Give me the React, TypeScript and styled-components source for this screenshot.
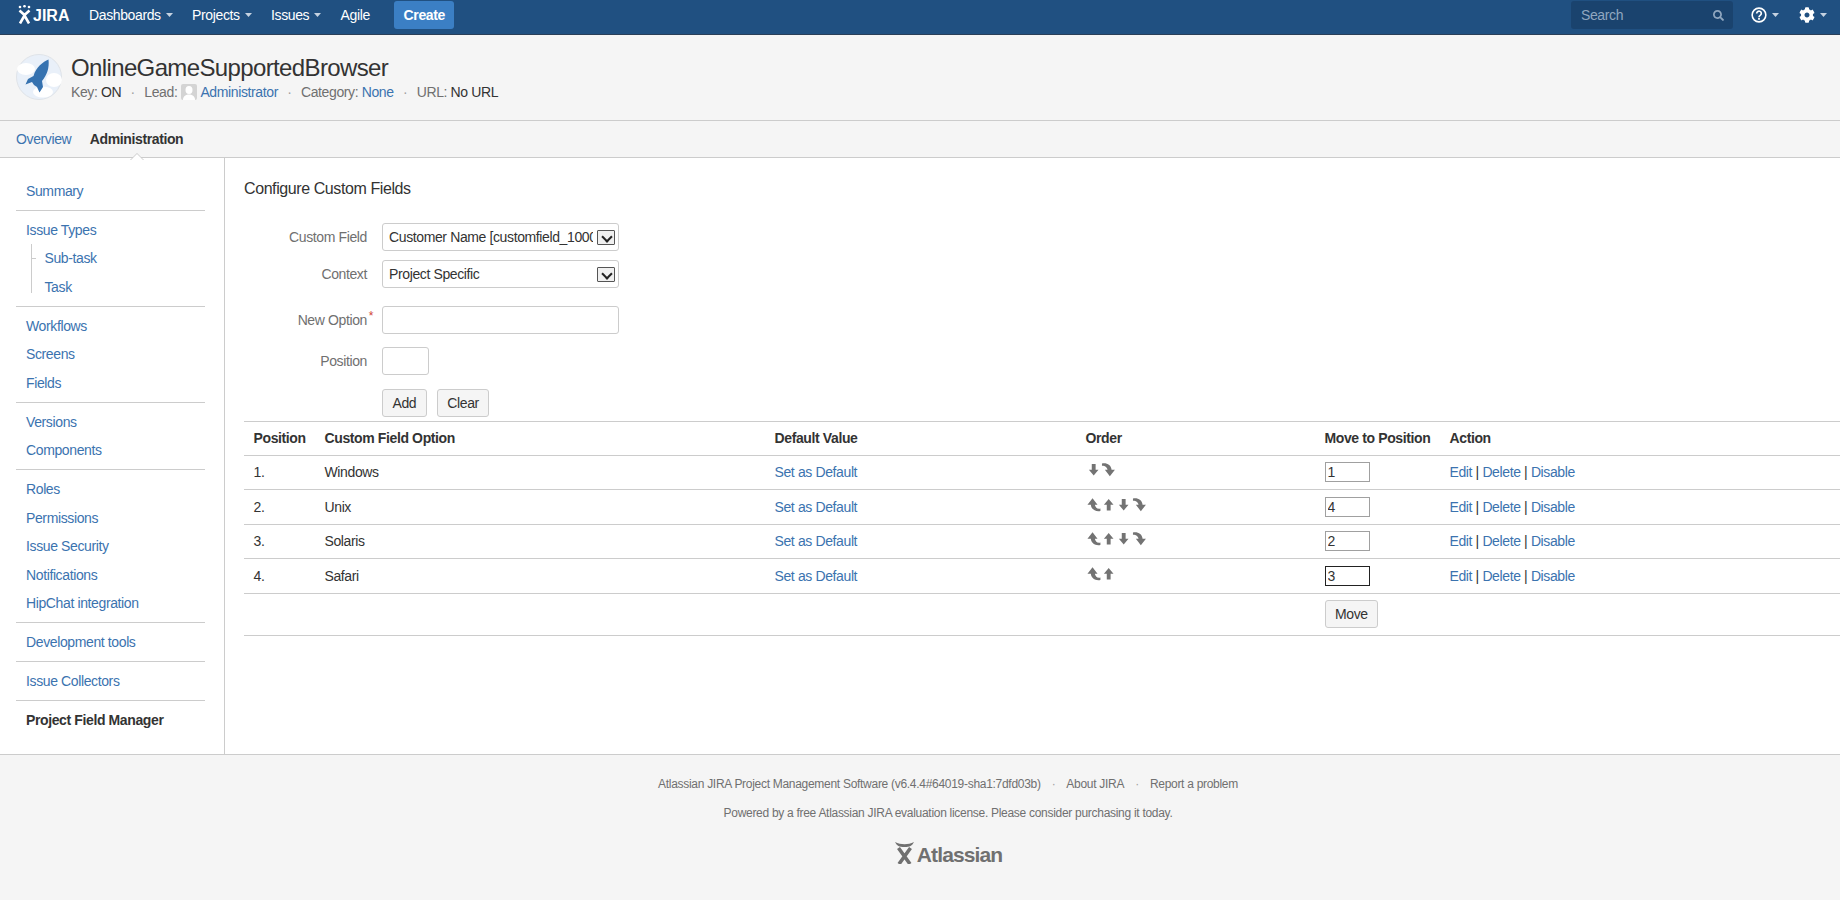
import React from "react";
import styled, { createGlobalStyle } from "styled-components";
import { FaCog, FaSearch } from "react-icons/fa";

const GlobalStyle = createGlobalStyle`
  html, body {
    margin: 0;
    padding: 0;
    background: #fff;
    color: #333;
    font-family: "Liberation Sans", Arial, sans-serif;
    font-size: 14px;
    line-height: 20px;
    letter-spacing: -0.38px;
  }
  * { box-sizing: border-box; }
  button, input, select { letter-spacing: inherit; }
`;

type Option = { pos: number; name: string; moves: string[]; target: string; focused?: boolean };

const options: Option[] = [
  { pos: 1, name: "Windows", moves: ["down", "last"], target: "1" },
  { pos: 2, name: "Unix", moves: ["first", "up", "down", "last"], target: "4" },
  { pos: 3, name: "Solaris", moves: ["first", "up", "down", "last"], target: "2" },
  { pos: 4, name: "Safari", moves: ["first", "up"], target: "3", focused: true },
];

const sidebarGroups = [
  ["Summary"],
  ["Issue Types", "Sub-task", "Task"],
  ["Workflows", "Screens", "Fields"],
  ["Versions", "Components"],
  ["Roles", "Permissions", "Issue Security", "Notifications", "HipChat integration"],
  ["Development tools"],
  ["Issue Collectors"],
];

const Caret = () => (
  <CaretIcon width="7" height="4" viewBox="0 0 7 4">
    <path d="M0 0h7L3.500 4z" fill="currentColor" />
  </CaretIcon>
);

const JiraMark = () => (
  <svg width="13" height="19" viewBox="0 0 13 19">
    <circle cx="2" cy="2" r="1.3" fill="#fff" />
    <circle cx="6.5" cy="1.2" r="1.3" fill="#fff" />
    <circle cx="11" cy="2" r="1.3" fill="#fff" />
    <path d="M1.5 5.5 6.5 10l5-4.500M2 18.500 6.500 10.500 11 18.500" fill="none" stroke="#fff" strokeWidth="2.600" />
  </svg>
);

const HelpIcon = () => (
  <svg width="16" height="16" viewBox="0 0 18 18">
    <circle cx="9" cy="9" r="7.700" fill="none" stroke="#fff" strokeWidth="1.800" />
    <path d="M6.400 7.200a2.600 2.600 0 1 1 4 2.200c-.9.6-1.400 1-1.400 2" fill="none" stroke="#fff" strokeWidth="1.900" />
    <rect x="8" y="12.300" width="2" height="2" fill="#fff" />
  </svg>
);

const ProjectAvatar = () => (
  <svg width="46" height="46" viewBox="0 0 46 46">
    <circle cx="23" cy="23" r="22.500" fill="#e9f0f9" stroke="#dfe3e8" />
    <ellipse cx="10" cy="15" rx="9" ry="6" fill="#fff" />
    <ellipse cx="38" cy="26" rx="8" ry="7" fill="#fff" />
    <ellipse cx="27" cy="38" rx="10" ry="5.500" fill="#fff" />
    <path
      d="M32.500 5.500C27 8 20 13 17.500 22L12 25l-2.500 5.500L16 28l2 3 3 2 2.500 5.500L27 33l-1-6c5-6 7.500-13 6.500-21.500z"
      fill="#3572b0"
    />
  </svg>
);

const UserIcon = () => (
  <svg width="16" height="16" viewBox="0 0 16 16">
    <rect width="16" height="16" rx="2" fill="#d4d4d4" />
    <ellipse cx="8" cy="6" rx="3.500" ry="4" fill="#fff" />
    <path d="M2 16c0-4 3-5.500 6-5.500s6 1.500 6 5.500z" fill="#fff" />
  </svg>
);

const AtlassianMark = () => (
  <svg width="21" height="23" viewBox="0 0 21 23">
    <path d="M1 1c6 3 13 3 19 0-2 4-4 5-9.500 5S3 5 1 1z" fill="#707070" />
    <path d="M4.500 7 16 23M16.500 7 5 23" fill="none" stroke="#707070" strokeWidth="3.600" />
  </svg>
);

const MoveIcon = ({ kind }: { kind: string }) => {
  const curved = kind === "first" || kind === "last";
  return (
    <ArrowIcon $flip={kind === "first" || kind === "up"} viewBox="0 0 16 16">
      {curved ? (
        <path d="M1 1.500C6 .5 10.500 3 11 8h3.500l-5.300 6.800L4 8h2.800C6.500 6 4.500 3 1 4z" fill="#737373" />
      ) : (
        <path d="M6 2h4v6h3l-5 6-5-6h3z" fill="#737373" />
      )}
    </ArrowIcon>
  );
};

export default function App() {
  return (
    <Page>
      <GlobalStyle />
      <TopBar>
        <Logo>
          <JiraMark />
          <LogoText>JIRA</LogoText>
        </Logo>
        <TopLink>Dashboards<Caret /></TopLink>
        <TopLink>Projects<Caret /></TopLink>
        <TopLink>Issues<Caret /></TopLink>
        <TopLink>Agile</TopLink>
        <CreateButton>Create</CreateButton>
        <TopRight>
          <SearchBox>
            <SearchInput placeholder="Search" />
            <FaSearch size={11} />
          </SearchBox>
          <TopIconButton><HelpIcon /><Caret /></TopIconButton>
          <TopIconButton><FaCog size={16} /><Caret /></TopIconButton>
        </TopRight>
      </TopBar>

      <ProjectHeader>
        <ProjectAvatar />
        <ProjectInfo>
          <ProjectTitle>OnlineGameSupportedBrowser</ProjectTitle>
          <ProjectMeta>
            <span>Key: <Value>ON</Value></span>
            <Dot>·</Dot>
            <LeadCell>Lead: <UserIcon /> <Link>Administrator</Link></LeadCell>
            <Dot>·</Dot>
            <span>Category: <Link>None</Link></span>
            <Dot>·</Dot>
            <span>URL: <Value>No URL</Value></span>
          </ProjectMeta>
        </ProjectInfo>
      </ProjectHeader>

      <TabBar>
        <Link>Overview</Link>
        <ActiveTab>Administration</ActiveTab>
      </TabBar>

      <Body>
        <Sidebar>
          {sidebarGroups.map((group) => (
            <SideGroup key={group[0]}>
              {group.map((item) =>
                item === "Sub-task" || item === "Task" ? (
                  <SubItem key={item} $first={item === "Sub-task"}>
                    <Link>{item}</Link>
                  </SubItem>
                ) : (
                  <SideItem key={item}>
                    <Link>{item}</Link>
                  </SideItem>
                )
              )}
            </SideGroup>
          ))}
          <LastGroup>
            <SideItem><strong>Project Field Manager</strong></SideItem>
          </LastGroup>
        </Sidebar>

        <Content>
          <Heading>Configure Custom Fields</Heading>
          <FieldRow $top={24.3}>
            <FieldLabel>Custom Field</FieldLabel>
            <SelectWrap>
              <Select defaultValue="customer">
                <option value="customer">Customer Name [customfield_10000]</option>
              </Select>
              <SelectArrow />
            </SelectWrap>
          </FieldRow>
          <FieldRow $top={9.6}>
            <FieldLabel>Context</FieldLabel>
            <SelectWrap>
              <Select defaultValue="project">
                <option value="project">Project Specific</option>
              </Select>
              <SelectArrow />
            </SelectWrap>
          </FieldRow>
          <FieldRow $top={18.3}>
            <FieldLabel>New Option<Required>*</Required></FieldLabel>
            <TextInput $width={237} />
          </FieldRow>
          <FieldRow $top={13.3}>
            <FieldLabel>Position</FieldLabel>
            <TextInput $width={47} />
          </FieldRow>
          <FieldRow $top={13.3}>
            <FieldLabel />
            <Button>Add</Button>
            <Button $left={-5}>Clear</Button>
          </FieldRow>

          <OptionsTable>
            <colgroup>
              <ColumnWidth $w={71} />
              <ColumnWidth $w={450} />
              <ColumnWidth $w={311} />
              <ColumnWidth $w={239} />
              <ColumnWidth $w={125} />
              <col />
            </colgroup>
            <thead>
              <tr>
                <th>Position</th>
                <th>Custom Field Option</th>
                <th>Default Value</th>
                <th>Order</th>
                <th>Move to Position</th>
                <th>Action</th>
              </tr>
            </thead>
            <tbody>
              {options.map((o) => (
                <tr key={o.pos}>
                  <td>{o.pos}.</td>
                  <td>{o.name}</td>
                  <td><Link>Set as Default</Link></td>
                  <td>
                    <MoveIcons>
                      {o.moves.map((m) => <MoveIcon key={m} kind={m} />)}
                    </MoveIcons>
                  </td>
                  <td><MoveInput $focused={o.focused} defaultValue={o.target} /></td>
                  <td>
                    <Link>Edit</Link> | <Link>Delete</Link> | <Link>Disable</Link>
                  </td>
                </tr>
              ))}
              <MoveRow>
                <td colSpan={4} />
                <td><Button>Move</Button></td>
                <td />
              </MoveRow>
            </tbody>
          </OptionsTable>
        </Content>
      </Body>

      <Footer>
        <FooterLine>
          Atlassian JIRA Project Management Software (v6.4.4#64019-sha1:7dfd03b)
          <FooterDot>·</FooterDot>About JIRA<FooterDot>·</FooterDot>Report a problem
        </FooterLine>
        <FooterLine>Powered by a free Atlassian JIRA evaluation license. Please consider purchasing it today.</FooterLine>
        <FooterLogo>
          <AtlassianMark />
          <FooterLogoText>Atlassian</FooterLogoText>
        </FooterLogo>
      </Footer>
    </Page>
  );
}

const Page = styled.div`
  display: flex;
  flex-direction: column;
  height: 900px;
  overflow: hidden;
`;

const TopBar = styled.header`
  display: flex;
  align-items: flex-start;
  flex: none;
  height: 35px;
  padding: 1px 0 0 18px;
  background: #205081;
  border-bottom: 1px solid #2a3f58;
  color: #fff;
`;

const Logo = styled.div`
  display: flex;
  align-items: flex-start;
  gap: 2px;
  width: 71px;
  padding-top: 4px;
`;

const LogoText = styled.span`
  font-size: 16px;
  font-weight: bold;
  line-height: 20px;
  letter-spacing: 0;
  margin-top: 1px;
`;

const CaretIcon = styled.svg`
  flex: none;
  margin-left: 5px;
  color: #c5d2e1;
`;

const TopLink = styled.a`
  display: flex;
  align-items: center;
  height: 28px;
  margin-right: 19.400px;
  color: #fff;
`;

const CreateButton = styled.button`
  height: 28px;
  width: 60px;
  margin-left: 5px;
  padding: 0;
  border: 0;
  border-radius: 3px;
  background: #3b7fc4;
  color: #fff;
  font: bold 14px "Liberation Sans", Arial, sans-serif;
`;

const TopRight = styled.div`
  display: flex;
  align-items: center;
  height: 28px;
  margin-left: auto;
`;

const SearchBox = styled.div`
  display: flex;
  align-items: center;
  width: 162px;
  height: 28px;
  padding: 0 9px 0 10px;
  border-radius: 3px;
  background: #1a436e;
  color: #90a7c0;
`;

const SearchInput = styled.input`
  flex: 1;
  min-width: 0;
  padding: 0;
  border: 0;
  outline: 0;
  background: none;
  color: #fff;
  font: 14px "Liberation Sans", Arial, sans-serif;
  &::placeholder {
    color: #90a7c0;
    opacity: 1;
  }
`;

const TopIconButton = styled.div`
  display: flex;
  align-items: center;
  margin-left: 18px;
  &:last-child {
    margin-left: 20px;
    margin-right: 13px;
  }
`;

const ProjectHeader = styled.div`
  display: flex;
  flex: none;
  align-items: flex-start;
  gap: 9px;
  height: 86px;
  padding: 19px 16px 0;
  background: #f5f5f5;
  border-bottom: 1px solid #ccc;
`;

const ProjectInfo = styled.div`
  display: flex;
  flex-direction: column;
`;

const ProjectTitle = styled.h1`
  margin: 0;
  font-size: 24px;
  font-weight: normal;
  line-height: 28px;
  letter-spacing: -0.63px;
  color: #333;
`;

const ProjectMeta = styled.div`
  display: flex;
  align-items: center;
  margin-top: -0.500px;
  color: #707070;
`;

const Value = styled.span`
  color: #333;
`;

const Dot = styled.span`
  width: 23px;
  text-align: center;
  color: #a0a0a0;
`;

const LeadCell = styled.span`
  display: inline-flex;
  align-items: center;
  gap: 3.500px;
`;

const Link = styled.a`
  color: #3b73af;
`;

const TabBar = styled.nav`
  display: flex;
  flex: none;
  align-items: center;
  gap: 18.500px;
  height: 37px;
  padding-left: 16px;
  background: #f5f5f5;
  border-bottom: 1px solid #ccc;
`;

const ActiveTab = styled.strong`
  position: relative;
  color: #333;
  &::before,
  &::after {
    content: "";
    position: absolute;
    left: 50%;
    margin-left: -7px;
    border: 7px solid transparent;
    border-top: 0;
  }
  &::before {
    top: 24px;
    border-bottom-color: #ccc;
  }
  &::after {
    top: 25px;
    border-bottom-color: #fff;
  }
`;

const Body = styled.div`
  display: flex;
  flex: none;
  height: 596px;
`;

const Sidebar = styled.aside`
  flex: none;
  width: 225px;
  padding: 14px 19px 0 16px;
  border-right: 1px solid #ccc;
`;

const SideGroup = styled.div`
  padding: 4.8px 0;
  border-bottom: 1px solid #ccc;
`;

const LastGroup = styled.div`
  padding: 4.8px 0;
`;

const SideItem = styled.div`
  display: flex;
  align-items: center;
  height: 28.450px;
  padding-left: 10px;
`;

const SubItem = styled(SideItem)<{ $first: boolean }>`
  position: relative;
  padding-left: 28.500px;
  &::before {
    content: "";
    position: absolute;
    left: 15px;
    top: ${(p) => (p.$first ? "0" : "-4px")};
    bottom: ${(p) => (p.$first ? "0" : "8px")};
    width: 1px;
    background: #ccc;
  }
  &::after {
    content: "";
    display: ${(p) => (p.$first ? "block" : "none")};
    position: absolute;
    left: 15px;
    top: 14px;
    width: 5px;
    height: 1px;
    background: #ccc;
  }
`;

const Content = styled.main`
  flex: 1;
  min-width: 0;
  padding: 21px 0 0 19px;
`;

const Heading = styled.h2`
  margin: 0;
  font-size: 16px;
  font-weight: normal;
  line-height: 20px;
  letter-spacing: -0.41px;
  color: #333;
`;

const FieldRow = styled.div<{ $top: number }>`
  display: flex;
  align-items: center;
  gap: 15px;
  margin-top: ${(p) => p.$top}px;
`;

const FieldLabel = styled.label`
  position: relative;
  flex: none;
  width: 123px;
  text-align: right;
  color: #707070;
`;

const Required = styled.span`
  position: absolute;
  top: -4px;
  right: -6px;
  color: #d04437;
  font-size: 12px;
`;

const SelectWrap = styled.div`
  position: relative;
  width: 237px;
  height: 27.400px;
`;

const Select = styled.select`
  display: block;
  width: 100%;
  height: 100%;
  padding: 0 25px 0 6px;
  border: 1px solid #ccc;
  border-radius: 3px;
  outline: 0;
  appearance: none;
  background: #fff;
  color: #333;
  font: 14px "Liberation Sans", Arial, sans-serif;
`;

const SelectArrow = styled.span`
  position: absolute;
  top: 7px;
  right: 4px;
  width: 18px;
  height: 15px;
  border: 1px solid #555;
  border-radius: 1px;
  background: #f0f0f0;
  pointer-events: none;
  &::after {
    content: "";
    position: absolute;
    top: 1.500px;
    left: 5px;
    width: 6px;
    height: 6px;
    border-right: 2px solid #222;
    border-bottom: 2px solid #222;
    transform: rotate(45deg);
  }
`;

const TextInput = styled.input<{ $width: number }>`
  width: ${(p) => p.$width}px;
  height: 28px;
  padding: 0 5px;
  border: 1px solid #ccc;
  border-radius: 3px;
  outline: 0;
`;

const Button = styled.button<{ $left?: number }>`
  height: 28.500px;
  margin-left: ${(p) => p.$left ?? 0}px;
  padding: 0 9.500px;
  border: 1px solid #ccc;
  border-radius: 3px;
  background: #f5f5f5;
  color: #333;
  font: 14px "Liberation Sans", Arial, sans-serif;
`;

const OptionsTable = styled.table`
  width: 100%;
  margin-top: 3.600px;
  table-layout: fixed;
  border-collapse: separate;
  border-spacing: 0;
  border-top: 1px solid #ccc;
  th,
  td {
    padding: 0 9.500px;
    border-bottom: 1px solid #ccc;
    text-align: left;
    white-space: nowrap;
  }
  th {
    height: 34px;
    color: #333;
    font-weight: bold;
  }
  td {
    height: 34.500px;
    color: #333;
  }
`;

const ColumnWidth = styled.col<{ $w: number }>`
  width: ${(p) => p.$w}px;
`;

const MoveRow = styled.tr`
  td {
    height: 42px;
  }
`;

const MoveIcons = styled.div`
  display: flex;
  margin-bottom: 5px;
`;

const ArrowIcon = styled.svg<{ $flip: boolean }>`
  flex: none;
  width: 15.400px;
  height: 15.400px;
  transform: ${(p) => (p.$flip ? "rotate(180deg)" : "none")};
`;

const MoveInput = styled.input<{ $focused?: boolean }>`
  display: block;
  width: 45px;
  height: 20px;
  padding: 0 2px;
  border: 1px solid ${(p) => (p.$focused ? "#222" : "#767676")};
  outline: ${(p) => (p.$focused ? "1px solid #222" : "1px solid #a0a0a0")};
  outline-offset: -1px;
  color: #333;
  font: 14px "Liberation Sans", Arial, sans-serif;
`;

const Footer = styled.footer`
  flex: 1;
  padding: 19px 0 0 56px;
  background: #f5f5f5;
  border-top: 1px solid #ccc;
  color: #707070;
  font-size: 12px;
  letter-spacing: -0.29px;
  text-align: center;
`;

const FooterLine = styled.div`
  height: 29px;
  line-height: 20px;
`;

const FooterDot = styled.span`
  margin: 0 11px;
  color: #a0a0a0;
`;

const FooterLogo = styled.div`
  display: flex;
  justify-content: center;
  align-items: flex-end;
  gap: 2px;
  margin-top: 9px;
`;

const FooterLogoText = styled.span`
  font-size: 21px;
  font-weight: bold;
  line-height: 18px;
  letter-spacing: -0.9px;
`;
